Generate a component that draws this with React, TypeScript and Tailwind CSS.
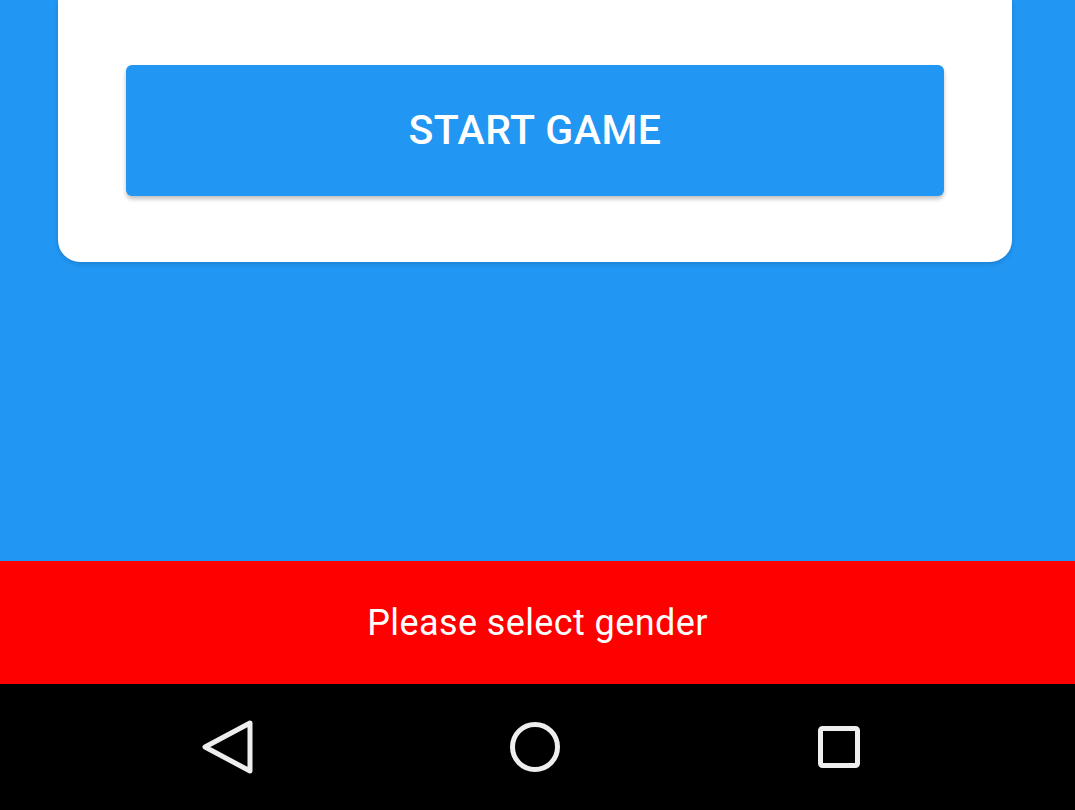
export default function App() {
  return (
    <div
      className="flex h-[810px] w-[1075px] flex-col overflow-hidden bg-[#2196f3]"
      style={{ fontFamily: "Roboto, 'Liberation Sans', sans-serif" }}
    >
      {/* card (top cut off) */}
      <div className="ml-[58px] w-[954px] rounded-b-[22px] bg-white px-[68px] pb-[66px] pt-[65px] shadow-[0_2px_4px_rgba(0,0,0,0.15)]">
        <button className="flex h-[131px] w-full items-center justify-center rounded-[6px] bg-[#2196f3] text-[41px] font-medium tracking-[0.5px] text-white shadow-[0_3px_4px_rgba(0,0,0,0.25)]">
          START GAME
        </button>
      </div>

      <div className="flex-1" />

      {/* snackbar */}
      <div className="flex h-[123px] items-center justify-center bg-[#ff0000]">
        <span className="text-[36px] tracking-[0.4px] text-white">Please select gender</span>
      </div>

      {/* nav bar */}
      <div className="flex h-[126px] items-center bg-black pl-[200px]">
        <svg width="56" height="56" viewBox="0 0 56 56" fill="none">
          <path d="M50 4 L5 28 L50 52 Z" stroke="#eeeeee" strokeWidth="5" strokeLinejoin="round" />
        </svg>
        <svg className="ml-[251px]" width="56" height="56" viewBox="0 0 56 56" fill="none">
          <circle cx="28" cy="28" r="22.5" stroke="#eeeeee" strokeWidth="5" />
        </svg>
        <svg className="ml-[248px]" width="56" height="56" viewBox="0 0 56 56" fill="none">
          <rect x="9.5" y="9.5" width="37" height="37" rx="2" stroke="#eeeeee" strokeWidth="5" />
        </svg>
      </div>
    </div>
  );
}
